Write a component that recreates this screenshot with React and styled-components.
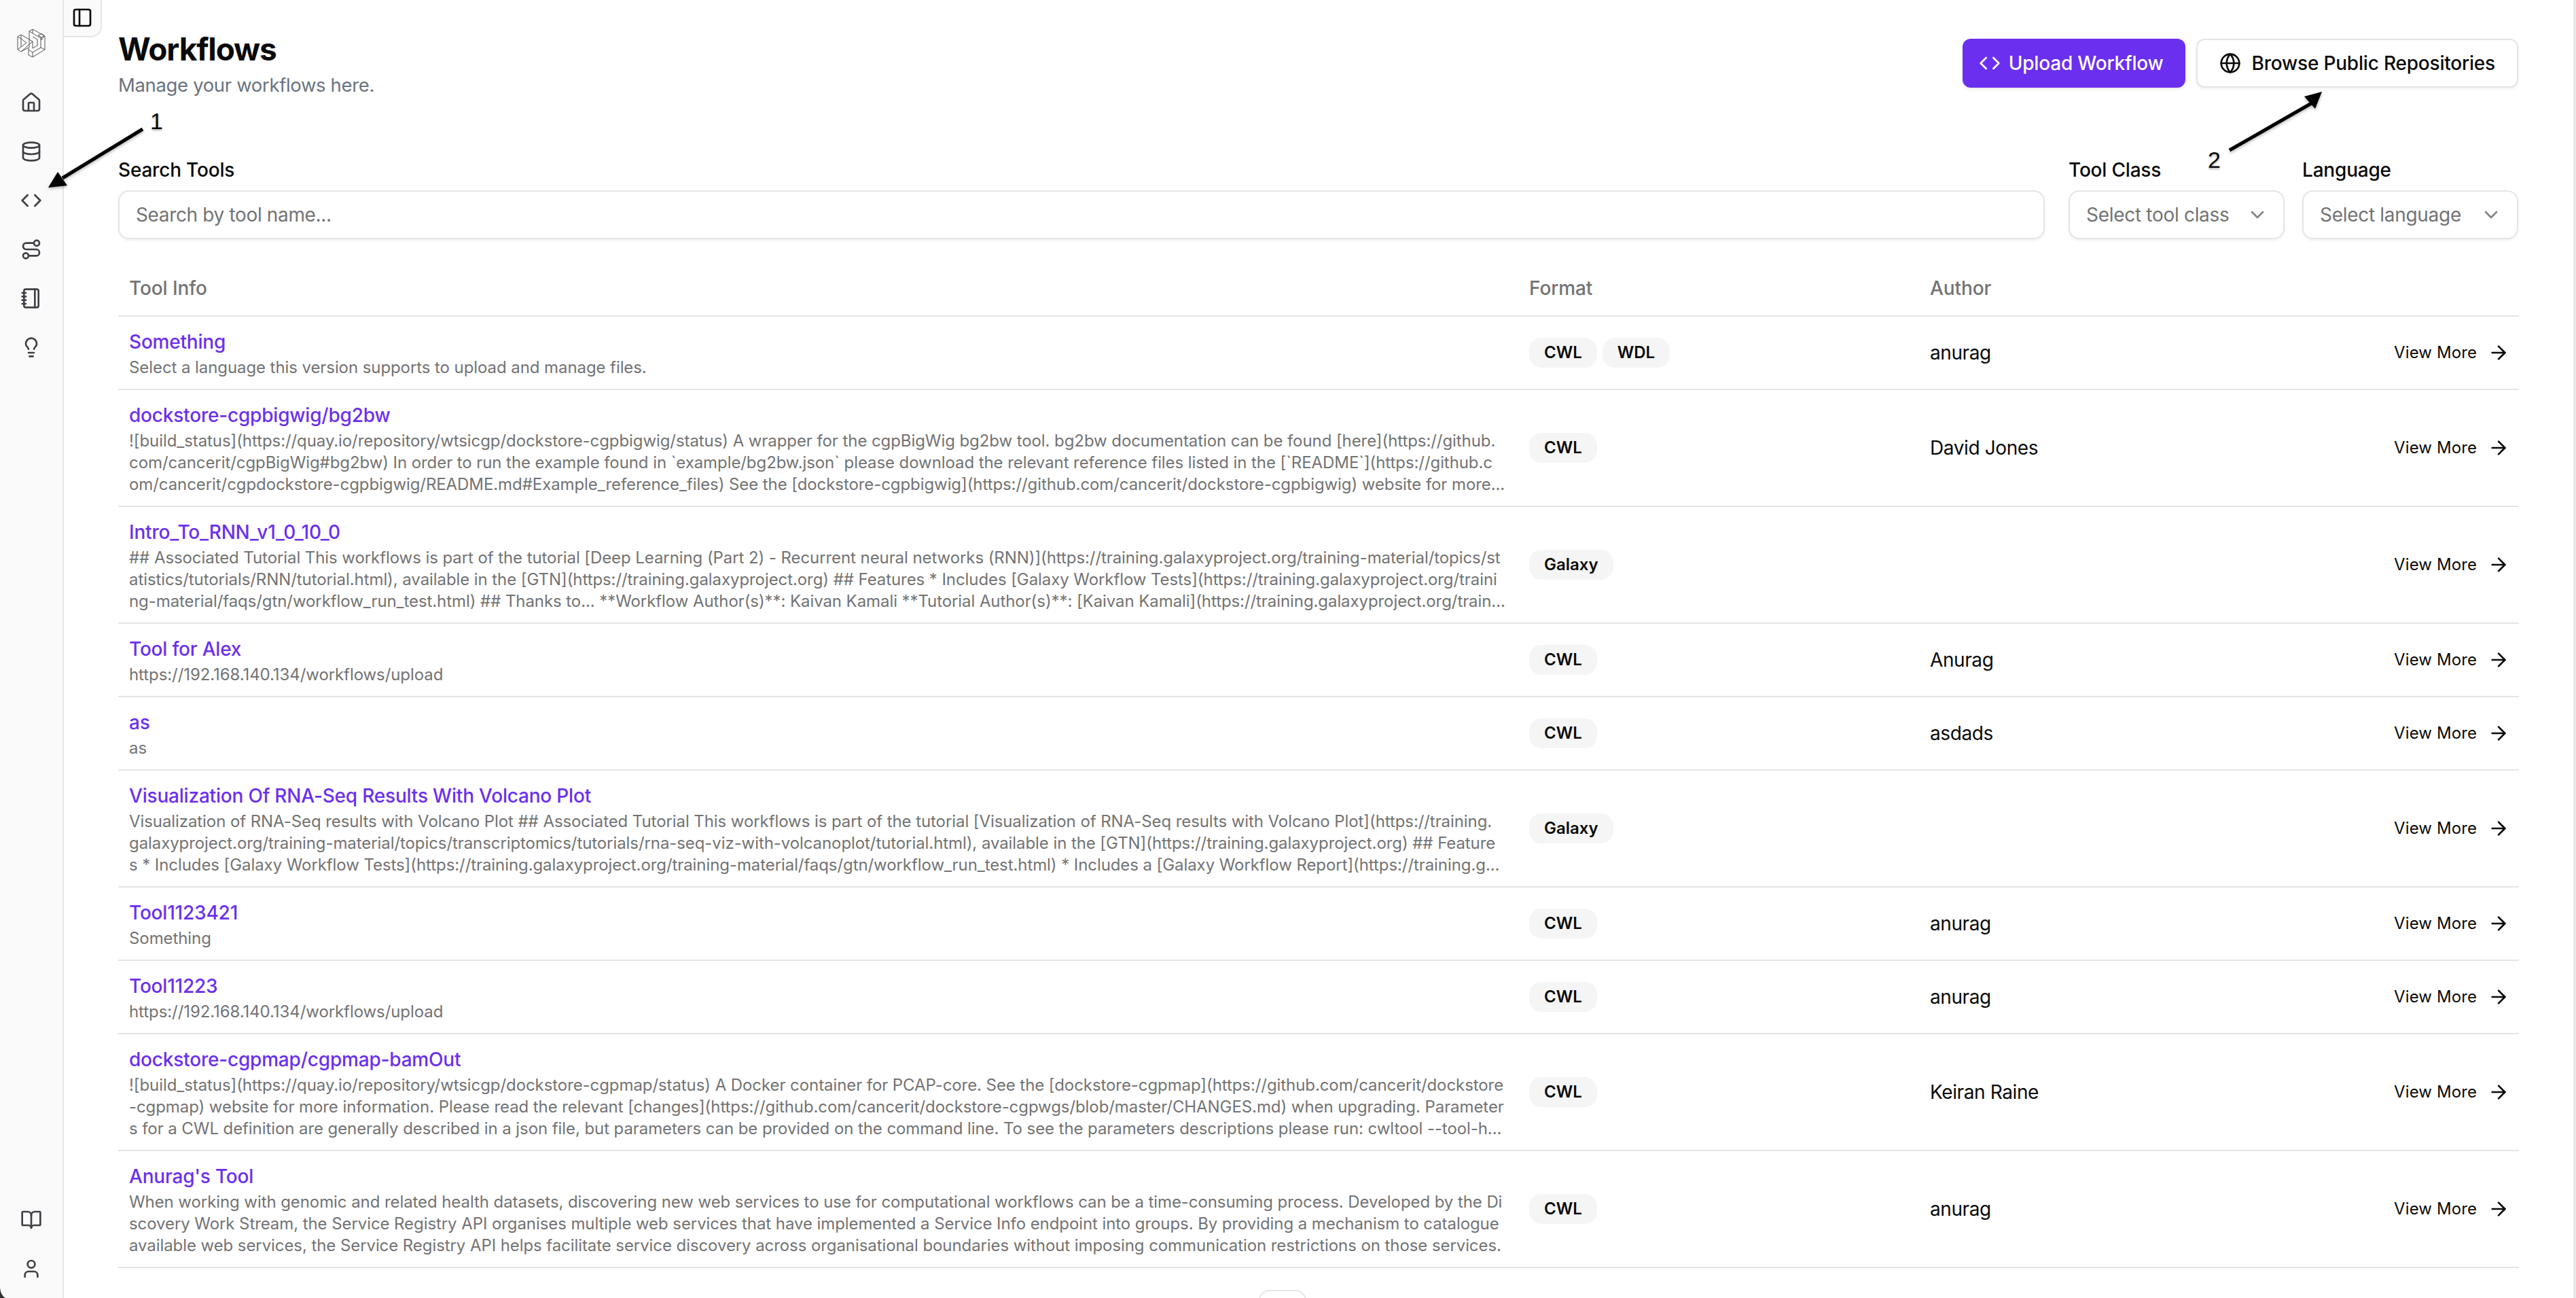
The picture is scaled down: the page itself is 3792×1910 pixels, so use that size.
import React from "react";
import styled, { createGlobalStyle } from "styled-components";
import { House, Database, Code, Route, Notebook, Lightbulb, BookOpen, User, PanelLeft, Globe, ChevronDown, ArrowRight } from "lucide-react";

const Global = createGlobalStyle`
  html, body { margin: 0; padding: 0; background: #fff; }
  body { font-family: Inter, "Noto Sans", "Liberation Sans", sans-serif; color: #0a0a0a; -webkit-font-smoothing: antialiased; }
  * { box-sizing: border-box; }
`;

const Shell = styled.div`
  position: relative;
  display: flex;
  width: 3792px;
  height: 1910px;
  overflow: hidden;
  background: #fff;
`;
const Sidebar = styled.aside`
  flex: 0 0 94px;
  display: flex;
  flex-direction: column;
  align-items: center;
  background: #fafafa;
  border-right: 2px solid #e5e5e5;
  padding: 42px 0 7px;
`;
const Logo = styled.svg`
  width: 44px;
  height: 44px;
  margin-bottom: 29px;
  flex: none;
`;
const NavItem = styled.a`
  display: flex;
  align-items: center;
  justify-content: center;
  width: 64px;
  height: 72px;
  color: #3f3f46;
  flex: none;
`;
const Spacer = styled.div`flex: 1;`;
const Main = styled.main`
  flex: 1;
  position: relative;
  min-width: 0;
  border-right: 4px solid #e8e8e8;
  padding: 40px 80px 0;
`;
const Toggle = styled.button`
  position: absolute;
  left: 0;
  top: -2px;
  width: 56px;
  height: 57px;
  padding: 0;
  display: flex;
  align-items: center;
  justify-content: center;
  background: #fafafa;
  color: #0a0a0a;
  border: 2px solid #e5e5e5;
  border-width: 0 2px 2px 0;
  border-bottom-right-radius: 16px;
`;
const Header = styled.header`
  display: flex;
  align-items: center;
  justify-content: space-between;
`;
const Title = styled.h1`
  margin: 0;
  font-size: 46px;
  line-height: 64px;
  font-weight: 700;
  letter-spacing: -1.15px;
  color: #0a0a0a;
`;
const Subtitle = styled.p`
  margin: 1px 0 0;
  font-size: 27.5px;
  line-height: 40px;
  letter-spacing: -0.35px;
  color: #6b7280;
`;
const Actions = styled.div`
  display: flex;
  gap: 16px;
  margin-right: 1px;
`;
const Primary = styled.button`
  display: flex;
  align-items: center;
  gap: 12px;
  height: 72px;
  padding: 0 32px 0 24px;
  border: 0;
  border-radius: 12px;
  background: #6b2ff0;
  color: #fff;
  font: 500 28px/40px Inter, sans-serif;
  letter-spacing: -0.2px;
  box-shadow: 0 2px 4px rgba(0,0,0,.1);
`;
const Secondary = styled.button`
  display: flex;
  align-items: center;
  gap: 16px;
  height: 72px;
  padding: 0 32px;
  border: 2px solid #e5e5e5;
  border-radius: 12px;
  background: #fff;
  color: #0a0a0a;
  font: 500 28px/40px Inter, sans-serif;
  letter-spacing: -0.2px;
  box-shadow: 0 2px 4px rgba(0,0,0,.06);
`;
const Filters = styled.div`
  display: flex;
  margin-top: 85px;
  padding-right: 1px;
`;
const Field = styled.div`
  display: flex;
  flex-direction: column;
  gap: 10px;
  flex: ${p => (p.$grow ? 1 : "none")};
  width: ${p => (p.$width ? p.$width + "px" : "auto")};
  margin-left: ${p => p.$gap || 0}px;
`;
const Label = styled.label`
  font-size: 28px;
  line-height: 40px;
  font-weight: 500;
  letter-spacing: -0.2px;
  color: #0a0a0a;
`;
const SearchInput = styled.input`
  height: 72px;
  width: 100%;
  padding: 0 24px;
  border: 2px solid #e5e5e5;
  border-radius: 16px;
  background: #fff;
  font: 400 28px/40px Inter, sans-serif;
  letter-spacing: -0.35px;
  color: #0a0a0a;
  box-shadow: 0 2px 4px rgba(0,0,0,.06);
  outline: none;
  &::placeholder { color: #737373; opacity: 1; }
`;
const Select = styled.button`
  display: flex;
  align-items: center;
  justify-content: space-between;
  height: 72px;
  width: 100%;
  padding: 0 22px 0 24px;
  border: 2px solid #e5e5e5;
  border-radius: 16px;
  background: #fff;
  font: 400 28px/40px Inter, sans-serif;
  letter-spacing: -0.3px;
  color: #737373;
  box-shadow: 0 2px 4px rgba(0,0,0,.06);
  svg { opacity: .5; color: #0a0a0a; }
`;
const Table = styled.div`
  margin-top: 30px;
`;
const Row = styled.div`
  display: grid;
  grid-template-columns: 2061px 590px 1fr auto;
  align-items: center;
  border-bottom: 2px solid #e5e5e5;
  min-height: ${p => (p.$head ? "84px" : "auto")};
  padding-top: ${p => (p.$head ? "2px" : "0")};
  color: ${p => (p.$head ? "#737373" : "#0a0a0a")};
  font-weight: ${p => (p.$head ? 500 : 400)};
  font-size: 28px;
  line-height: 40px;
  letter-spacing: ${p => (p.$head ? "-0.1px" : "-0.4px")};
`;
const Info = styled.div`
  padding: ${p => (p.$head ? "0 16px" : "17px 16px 15px")};
  min-width: 0;
`;
const Cell = styled.div`
  padding: 0 16px;
  display: flex;
  gap: 8px;
`;
const Name = styled.a`
  display: block;
  font-size: 28px;
  line-height: 40px;
  font-weight: 500;
  letter-spacing: -0.2px;
  color: #6b2ff0;
  margin-bottom: 2px;
`;
const Desc = styled.p`
  margin: 0;
  font-size: 24px;
  line-height: 32px;
  letter-spacing: -0.08px;
  color: #737373;
`;
const DescLine = styled.span`
  display: block;
  white-space: pre;
`;
const Badge = styled.span`
  display: inline-flex;
  align-items: center;
  height: 44px;
  padding: 0 22px;
  border-radius: 18px;
  background: #f5f5f5;
  color: #0a0a0a;
  font-size: 24px;
  line-height: 32px;
  font-weight: 600;
  letter-spacing: 0;
`;
const ViewMore = styled.a`
  display: flex;
  align-items: center;
  gap: 16px;
  padding-right: 14px;
  font-size: 24px;
  line-height: 32px;
  font-weight: 400;
  letter-spacing: 0.1px;
  color: #0a0a0a;
`;
const Pager = styled.div`
  margin-top: 32px;
  padding-left: 1679px;
`;
const PageButton = styled.button`
  display: block;
  width: 70px;
  height: 72px;
  border: 2px solid #e5e5e5;
  border-radius: 16px;
  background: #fff;
`;
const Overlay = styled.svg`
  position: absolute;
  inset: 0;
  width: 3792px;
  height: 1910px;
  pointer-events: none;
`;
const Note = styled.span`
  position: absolute;
  left: ${p => p.$x}px;
  top: ${p => p.$y}px;
  font: 400 34px/40px "Liberation Sans", Arial, sans-serif;
  color: #0a0a0a;
  text-shadow: 0 2px 3px rgba(0,0,0,.3);
`;

const rows = [
  { name: "Something", desc: ["Select a language this version supports to upload and manage files."], fmt: ["CWL", "WDL"], author: "anurag" },
  { name: "dockstore-cgpbigwig/bg2bw", desc: [
    "![build_status](https://quay.io/repository/wtsicgp/dockstore-cgpbigwig/status) A wrapper for the cgpBigWig bg2bw tool. bg2bw documentation can be found [here](https://github.",
    "com/cancerit/cgpBigWig#bg2bw) In order to run the example found in `example/bg2bw.json` please download the relevant reference files listed in the [`README`](https://github.c",
    "om/cancerit/cgpdockstore-cgpbigwig/README.md#Example_reference_files) See the [dockstore-cgpbigwig](https://github.com/cancerit/dockstore-cgpbigwig) website for more...",
  ], fmt: ["CWL"], author: "David Jones" },
  { name: "Intro_To_RNN_v1_0_10_0", desc: [
    "## Associated Tutorial This workflows is part of the tutorial [Deep Learning (Part 2) - Recurrent neural networks (RNN)](https://training.galaxyproject.org/training-material/topics/st",
    "atistics/tutorials/RNN/tutorial.html), available in the [GTN](https://training.galaxyproject.org) ## Features * Includes [Galaxy Workflow Tests](https://training.galaxyproject.org/traini",
    "ng-material/faqs/gtn/workflow_run_test.html) ## Thanks to... **Workflow Author(s)**: Kaivan Kamali **Tutorial Author(s)**: [Kaivan Kamali](https://training.galaxyproject.org/train...",
  ], fmt: ["Galaxy"], author: "" },
  { name: "Tool for Alex", desc: ["https://192.168.140.134/workflows/upload"], fmt: ["CWL"], author: "Anurag" },
  { name: "as", desc: ["as"], fmt: ["CWL"], author: "asdads" },
  { name: "Visualization Of RNA-Seq Results With Volcano Plot", desc: [
    "Visualization of RNA-Seq results with Volcano Plot ## Associated Tutorial This workflows is part of the tutorial [Visualization of RNA-Seq results with Volcano Plot](https://training.",
    "galaxyproject.org/training-material/topics/transcriptomics/tutorials/rna-seq-viz-with-volcanoplot/tutorial.html), available in the [GTN](https://training.galaxyproject.org) ## Feature",
    "s * Includes [Galaxy Workflow Tests](https://training.galaxyproject.org/training-material/faqs/gtn/workflow_run_test.html) * Includes a [Galaxy Workflow Report](https://training.g...",
  ], fmt: ["Galaxy"], author: "" },
  { name: "Tool1123421", desc: ["Something"], fmt: ["CWL"], author: "anurag" },
  { name: "Tool11223", desc: ["https://192.168.140.134/workflows/upload"], fmt: ["CWL"], author: "anurag" },
  { name: "dockstore-cgpmap/cgpmap-bamOut", desc: [
    "![build_status](https://quay.io/repository/wtsicgp/dockstore-cgpmap/status) A Docker container for PCAP-core. See the [dockstore-cgpmap](https://github.com/cancerit/dockstore",
    "-cgpmap) website for more information. Please read the relevant [changes](https://github.com/cancerit/dockstore-cgpwgs/blob/master/CHANGES.md) when upgrading. Parameter",
    "s for a CWL definition are generally described in a json file, but parameters can be provided on the command line. To see the parameters descriptions please run: cwltool --tool-h...",
  ], fmt: ["CWL"], author: "Keiran Raine" },
  { name: "Anurag's Tool", desc: [
    "When working with genomic and related health datasets, discovering new web services to use for computational workflows can be a time-consuming process. Developed by the Di",
    "scovery Work Stream, the Service Registry API organises multiple web services that have implemented a Service Info endpoint into groups. By providing a mechanism to catalogue",
    "available web services, the Service Registry API helps facilitate service discovery across organisational boundaries without imposing communication restrictions on those services.",
  ], fmt: ["CWL"], author: "anurag" },
];

const topNav = [House, Database, Code, Route, Notebook, Lightbulb];
const bottomNav = [BookOpen, User];

export default function App() {
  return (
    <Shell>
      <Global />
      <Sidebar>
        <Logo viewBox="-1 -1 44 44" fill="none" stroke="#55555a" strokeWidth="1" strokeLinejoin="round">
          <path d="M1 11 L6 8 L18 15 V3 L23 0 L41 10 V30 L23 41 L17 38 V27 L6 33 L1 30 Z" />
          <path d="M1 11 L6 14 V26 L1 30 M6 14 L14 20 L6 26 M6 8 V14 M18 15 V27 M18 15 L23 18 L6 33" />
          <path d="M23 0 V6 L35 13 V27 L23 34 V41 M23 6 L18 3 M23 34 L17 30 M35 27 L41 30 M23 18 V28 L30 24 V15 L23 11" />
          <path d="M31 9 L36 6.5 L40.5 9.5 L36 12 Z M36 12 V16 M40 10 L36 16" />
        </Logo>
        {topNav.map((I, i) => <NavItem key={i}><I size={32} /></NavItem>)}
        <Spacer />
        {bottomNav.map((I, i) => <NavItem key={i}><I size={32} /></NavItem>)}
      </Sidebar>
      <Main>
        <Toggle><PanelLeft size={32} /></Toggle>
        <Header>
          <div>
            <Title>Workflows</Title>
            <Subtitle>Manage your workflows here.</Subtitle>
          </div>
          <Actions>
            <Primary><Code size={32} />Upload Workflow</Primary>
            <Secondary><Globe size={32} />Browse Public Repositories</Secondary>
          </Actions>
        </Header>
        <Filters>
          <Field $grow>
            <Label>Search Tools</Label>
            <SearchInput placeholder="Search by tool name..." />
          </Field>
          <Field $width={318} $gap={35}>
            <Label>Tool Class</Label>
            <Select>Select tool class<ChevronDown size={32} /></Select>
          </Field>
          <Field $width={318} $gap={26}>
            <Label>Language</Label>
            <Select>Select language<ChevronDown size={32} /></Select>
          </Field>
        </Filters>
        <Table>
          <Row $head>
            <Info $head>Tool Info</Info>
            <Cell>Format</Cell>
            <Cell>Author</Cell>
            <div />
          </Row>
          {rows.map(r => (
            <Row key={r.name}>
              <Info>
                <Name>{r.name}</Name>
                <Desc>{r.desc.map((l, i) => <DescLine key={i}>{l}</DescLine>)}</Desc>
              </Info>
              <Cell>{r.fmt.map(f => <Badge key={f}>{f}</Badge>)}</Cell>
              <Cell>{r.author}</Cell>
              <ViewMore>View More<ArrowRight size={32} /></ViewMore>
            </Row>
          ))}
        </Table>
        <Pager><PageButton aria-label="Page" /></Pager>
      </Main>
      <Overlay viewBox="0 0 3792 1910">
        <defs>
          <filter id="soft" x="-20%" y="-20%" width="140%" height="140%">
            <feDropShadow dx="0" dy="2" stdDeviation="2" floodColor="#000" floodOpacity=".3" />
          </filter>
        </defs>
        <g filter="url(#soft)" fill="#000" stroke="none">
          <path d="M210 190 L92 262" stroke="#000" strokeWidth="5" />
          <path d="M71 276 L85 253 L99 273 Z" />
          <path d="M3282 221 L3406 150" stroke="#000" strokeWidth="5" />
          <path d="M3418 135 L3408 160 L3392 142 Z" />
        </g>
        <path d="M0 1895 Q1 1906 8 1910 L0 1910 Z" fill="#333" />
      </Overlay>
      <Note $x={221} $y={158}>1</Note>
      <Note $x={3250} $y={215}>2</Note>
    </Shell>
  );
}
